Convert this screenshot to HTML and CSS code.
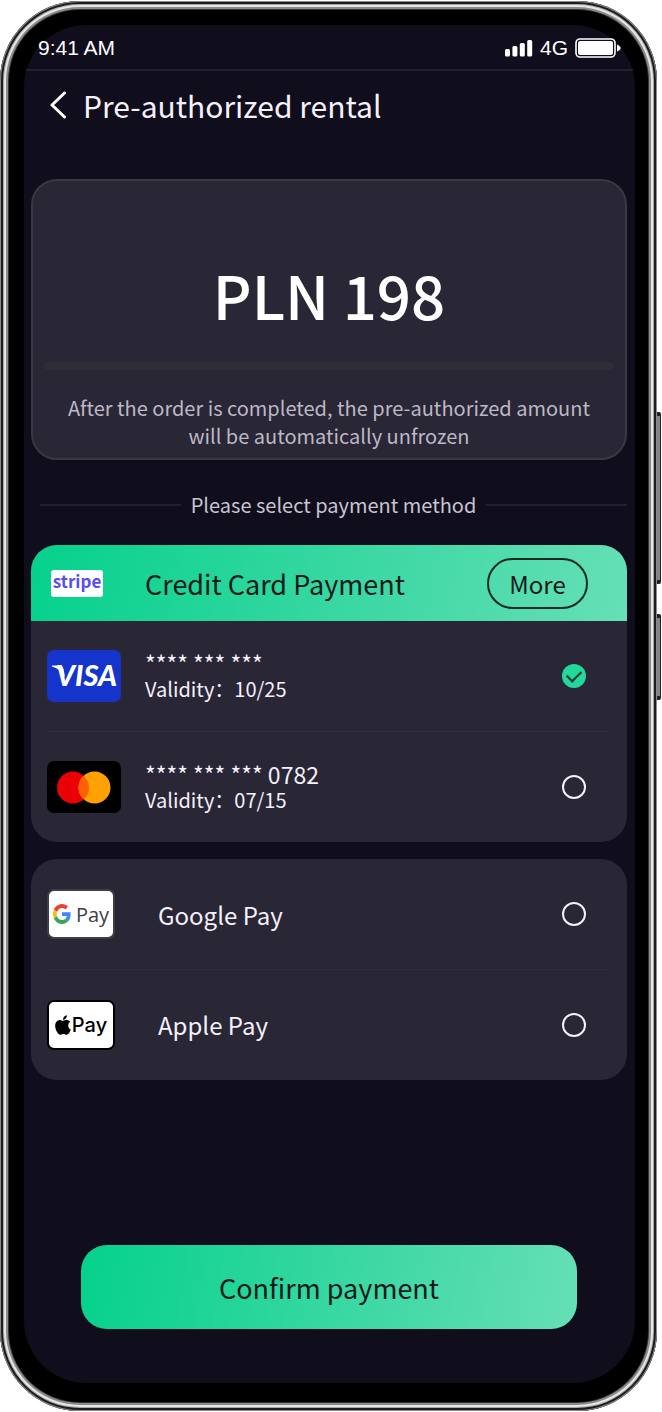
FILE: index.html
```html
<!DOCTYPE html>
<html lang="en">
<head>
    <meta charset="UTF-8">
    <meta name="viewport" content="width=device-width, initial-scale=1.0">
    <title>Pre-authorized rental</title>
    <link rel="stylesheet" href="styles.css">
</head>
<body>

<div class="phone">
    <span class="side-button volume"></span>
    <span class="side-button power"></span>

    <div class="screen">
        <div class="status-bar">
            <span>9:41 AM</span>
            <div class="status-icons">
                <svg width="28" height="18" viewBox="0 0 28 18" fill="#fff">
                    <rect x="0" y="10" width="5" height="7.500" rx="1.5"/>
                    <rect x="7.400" y="7" width="5" height="10.500" rx="1.5"/>
                    <rect x="14.800" y="4" width="5" height="13.500" rx="1.5"/>
                    <rect x="22.200" y="1" width="5" height="16.500" rx="1.5"/>
                </svg>
                <span>4G</span>
                <svg width="46" height="20" viewBox="0 0 46 20">
                    <rect x="1" y="1" width="39" height="18" rx="4" fill="none" stroke="#fff" stroke-width="1.6"/>
                    <rect x="3" y="3" width="35" height="14" rx="2" fill="#fff"/>
                    <path d="M42 6.500 Q45.600 8 45.600 10 Q45.600 12 42 13.500 Z" fill="#fff"/>
                </svg>
            </div>
        </div>

        <header>
            <button class="back" aria-label="Back">
                <svg width="18" height="28" viewBox="0 0 18 28" fill="none" stroke="#fff" stroke-width="3" stroke-linecap="round" stroke-linejoin="round">
                    <path d="M15.500 2 L3 14 L15.500 26"/>
                </svg>
            </button>
            <h1>Pre-authorized rental</h1>
        </header>

        <main>
            <div class="amount-card">
                <div class="amount">PLN 198</div>
                <div class="amount-line"></div>
                <p>After the order is completed, the pre-authorized amount will be automatically unfrozen</p>
            </div>

            <div class="divider"><h2>Please select payment method</h2></div>

            <div class="group">
                <div class="group-header">
                    <span class="logo stripe">stripe</span>
                    <h3>Credit Card Payment</h3>
                    <button class="more">More</button>
                </div>
                <label class="row">
                    <svg class="card-logo" width="74" height="52" viewBox="0 0 74 52">
                        <rect width="74" height="52" rx="7" fill="#1434cb"/>
                        <path d="M5 15.500 H12 Q15.500 15.500 16.500 19 L18 27 Q13 18.500 5 16.500 Z" fill="#fff"/>
                        <text x="9" y="36" class="visa-text">VISA</text>
                    </svg>
                    <span class="card-info">
                        <span class="card-number">**** *** ***</span>
                        <span>Validity：10/25</span>
                    </span>
                    <input type="radio" name="method" checked>
                </label>
                <label class="row">
                    <svg class="card-logo" width="74" height="52" viewBox="0 0 74 52">
                        <rect width="74" height="52" rx="7" fill="#000"/>
                        <circle cx="26" cy="26.500" r="16" fill="#eb0006"/>
                        <circle cx="47.500" cy="26.500" r="16" fill="#ffa200"/>
                        <path d="M36.750 14.650 A16 16 0 0 1 36.750 38.350 A16 16 0 0 1 36.750 14.650 Z" fill="#ff5f00"/>
                    </svg>
                    <span class="card-info">
                        <span class="card-number">**** *** *** 0782</span>
                        <span>Validity：07/15</span>
                    </span>
                    <input type="radio" name="method">
                </label>
            </div>

            <div class="group">
                <label class="row">
                    <span class="logo google">
                        <svg width="18" height="20" viewBox="0 0 48 48" preserveAspectRatio="none">
                            <path fill="#ea4335" d="M24 9.500c3.540 0 6.710 1.220 9.210 3.600l6.850-6.850C35.900 2.380 30.470 0 24 0 14.620 0 6.510 5.380 2.560 13.220l7.980 6.190C12.430 13.720 17.740 9.500 24 9.500z"/>
                            <path fill="#4285f4" d="M46.980 24.550c0-1.570-.150-3.090-.380-4.550H24v9.020h12.940c-.580 2.960-2.260 5.480-4.780 7.180l7.730 6c4.510-4.180 7.090-10.360 7.090-17.650z"/>
                            <path fill="#fbbc05" d="M10.530 28.590A14.500 14.500 0 0 1 9.770 24c0-1.600.270-3.140.760-4.590l-7.980-6.190A24 24 0 0 0 0 24c0 3.880.920 7.540 2.560 10.780z"/>
                            <path fill="#34a853" d="M24 48c6.480 0 11.930-2.130 15.890-5.810l-7.730-6c-2.150 1.450-4.920 2.300-8.160 2.300-6.260 0-11.570-4.220-13.470-9.910l-7.980 6.190C6.510 42.620 14.620 48 24 48z"/>
                        </svg>
                        Pay
                    </span>
                    <span class="wallet-name">Google Pay</span>
                    <input type="radio" name="method">
                </label>
                <label class="row">
                    <span class="logo apple">
                        <svg width="16" height="20" viewBox="0 28 384 456" preserveAspectRatio="none">
                            <path d="M318.700 268.700c-.200-36.700 16.400-64.400 50-84.800-18.800-26.900-47.200-41.700-84.700-44.600-35.500-2.800-74.300 20.700-88.500 20.700-15 0-49.400-19.700-76.400-19.700C63.300 141.200 4 184.800 4 273.500q0 39.300 14.400 81.200c12.800 36.700 59 126.700 107.200 125.200 25.200-.600 43-17.900 75.800-17.900 31.800 0 48.300 17.900 76.400 17.900 48.600-.700 90.400-82.500 102.600-119.300-65.200-30.700-61.700-90-61.700-91.900zm-56.600-164.200c27.300-32.400 24.800-61.900 24-72.500-24.100 1.400-52 16.400-67.900 34.900-17.500 19.800-27.800 44.300-25.600 71.900 26.100 2 49.900-11.400 69.500-34.300z"/>
                        </svg>
                        Pay
                    </span>
                    <span class="wallet-name">Apple Pay</span>
                    <input type="radio" name="method">
                </label>
            </div>
        </main>

        <button class="confirm">Confirm payment</button>
    </div>
</div>

</body>
</html>
```

FILE: styles.css
```css
* {
    box-sizing: border-box;
}
body {
    margin: 0;
    padding: 1px 5px 1px 0;
    background: #fff;
    color: #f4f1fb;
    font-family: "Noto Sans CJK SC", sans-serif;
}
h1, h2, h3, p {
    margin: 0;
    font-weight: 400;
}
button {
    font-family: inherit;
    cursor: pointer;
}

/* phone frame */
.phone {
    position: relative;
    display: flex;
    min-height: calc(100vh - 2px);
    padding: 24px 22px 28px 24px;
    border-radius: 80px;
    background: #000;
    box-shadow: inset 0 0 0 1px #8a8a8a, inset 0 0 0 3px #1c1e1e, inset 0 0 0 4px #a5a8a5, inset 0 0 0 6px #e6e6e4, inset 0 0 0 8px #8c8a8a, inset 0 0 0 9px #333;
}
.side-button {
    position: absolute;
    right: -4px;
    width: 4px;
    border-radius: 0 2px 2px 0;
    border: solid #222;
    border-width: 4px 1px 4px 0;
    background: #858585;
}
.volume {
    top: 411px;
    height: 172px;
}
.power {
    top: 613px;
    height: 86px;
}
.screen {
    flex: 1;
    display: flex;
    flex-direction: column;
    border-radius: 62px;
    background: #100d1c;
}

.status-bar {
    display: flex;
    justify-content: space-between;
    align-items: center;
    height: 46px;
    margin: 0 2px;
    padding: 2px 12px 0;
    border-bottom: 2px solid #22202c;
    font-family: "Liberation Sans", Arial, sans-serif;
    font-size: 21px;
    color: #fff;
}
.status-icons {
    display: flex;
    align-items: center;
    gap: 7px;
}
header {
    display: flex;
    align-items: center;
    gap: 16px;
    padding: 10px 25px 0;
}
.back {
    display: flex;
    padding: 0;
    border: none;
    background: none;
}
header h1 {
    font-size: 30px;
    line-height: 48px;
}
main {
    padding: 50px 8px 0 7px;
}

/* amount */
.amount-card {
    height: 281px;
    padding: 68px 11px 0;
    border: 2px solid #3a3842;
    border-radius: 26px;
    background: #292635;
    text-align: center;
}
.amount {
    font-size: 60px;
    font-weight: 500;
    line-height: 90px;
    color: #fff;
}
.amount-line {
    height: 8px;
    margin: 23px 0 24px;
    border-radius: 4px;
    background: #302d38;
}
.amount-card p {
    padding: 0 20px;
    font-size: 20px;
    line-height: 28px;
    color: #bcb8c6;
}
.divider {
    display: flex;
    align-items: center;
    gap: 10px;
    padding: 28px 0 23px 9px;
}
.divider::before,
.divider::after {
    content: "";
    flex: 1;
    height: 2px;
    background: #22202c;
}
.divider h2 {
    font-size: 20px;
    line-height: 34px;
    color: #c8c4d2;
}

/* payment methods */
.group {
    margin-bottom: 17px;
    border-radius: 26px;
    overflow: hidden;
    background: #292635;
}
.group-header {
    display: flex;
    align-items: center;
    height: 76px;
    padding: 0 39px 0 20px;
    background: linear-gradient(100deg, #05d18c, #45d9a8 65%, #66dfb6);
    color: #0b1a1a;
}
.logo {
    display: flex;
    align-items: center;
    justify-content: center;
    border-radius: 7px;
    background: #fff;
    color: #111;
}
.stripe {
    width: 52px;
    height: 27px;
    margin-right: 42px;
    padding-bottom: 4px;
    border-radius: 3px;
    font-size: 17px;
    font-weight: 700;
    line-height: 22px;
    color: #5a4df0;
}
.group-header h3 {
    flex: 1;
    font-size: 27px;
}
.more {
    width: 101px;
    height: 51px;
    padding: 0;
    border: 2px solid #0b2a20;
    border-radius: 26px;
    background: none;
    color: #0b1a1a;
    font-size: 24px;
}
.row {
    display: flex;
    align-items: center;
    height: 110px;
    padding: 0 41px 0 16px;
    cursor: pointer;
}
.row + .row {
    height: 111px;
    background: linear-gradient(#312e3b, #312e3b) center top / calc(100% - 36px) 1px no-repeat;
}
.card-logo {
    margin-right: 24px;
}
.visa-text {
    font-family: Lato, sans-serif;
    font-size: 29px;
    font-style: italic;
    font-weight: 900;
    fill: #fff;
}
.card-info {
    flex: 1;
    display: flex;
    flex-direction: column;
    font-size: 20px;
    line-height: 26px;
}
.card-number {
    font-size: 23px;
}
.row input {
    appearance: none;
    width: 24px;
    height: 24px;
    margin: 0;
    border: 2px solid #f4f1fb;
    border-radius: 50%;
}
.row input:checked {
    display: flex;
    align-items: center;
    justify-content: center;
    border: none;
    background: #24d79b;
}
.row input:checked::after {
    content: "";
    width: 12px;
    height: 7px;
    margin-bottom: 4px;
    border: solid #17372f;
    border-width: 0 0 2px 2px;
    transform: rotate(-45deg);
}
.google,
.apple {
    width: 68px;
    height: 50px;
    margin-right: 43px;
}
.google {
    gap: 5px;
    border: 2px solid #3c4043;
    font-family: "Open Sans", sans-serif;
    font-size: 20px;
    color: #3c4043;
}
.apple {
    gap: 1px;
    border: 2px solid #000;
    font-family: Inter, sans-serif;
    font-size: 20px;
    font-weight: 500;
    color: #000;
}
.wallet-name {
    flex: 1;
    font-size: 24px;
}

.confirm {
    height: 84px;
    margin: auto 58px 54px 57px;
    border: none;
    border-radius: 26px;
    background: linear-gradient(100deg, #05d18c, #45d9a8 65%, #66dfb6);
    color: #0b1a1a;
    font-size: 27px;
}
```
